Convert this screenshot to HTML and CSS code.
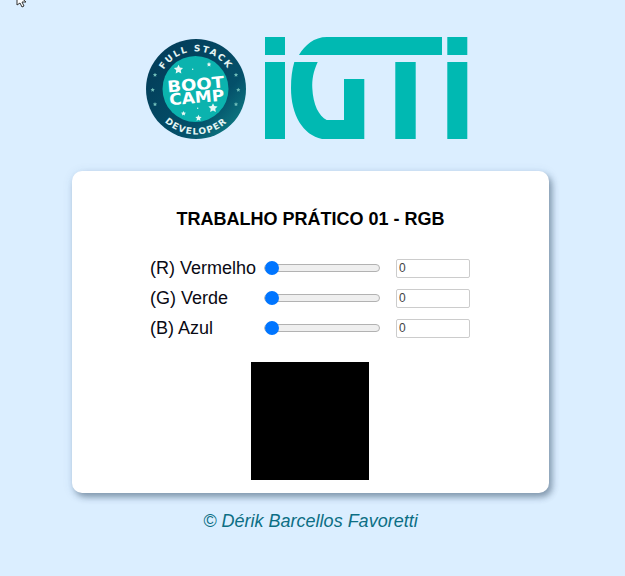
FILE: index.html
```html
<!DOCTYPE html>
<html lang="pt">
<head>
    <meta charset="UTF-8">
    <meta name="viewport" content="width=device-width, initial-scale=1.0">
    <title>Trabalho Prático 01 - RGB</title>
    <link rel="stylesheet" href="styles.css">
</head>
<body>

    <svg class="cursor" width="14" height="8" viewBox="0 0 14 8">
        <path d="M2 -6 L2 5 L5 3 L7 7 L9 6 L7 2 L11 2 Z" fill="#fff" stroke="#333" stroke-width="1"/>
    </svg>

    <div class="logos">
        <svg class="badge" width="100" height="100" viewBox="0 0 100 100">
            <defs>
                <linearGradient id="ring" x1="0.2" y1="0.2" x2="0.95" y2="0.9">
                    <stop offset="0" stop-color="#033f5b"/>
                    <stop offset="0.65" stop-color="#04506a"/>
                    <stop offset="1" stop-color="#0f7f85"/>
                </linearGradient>
                <path id="arc-top" d="M 12.5 50 A 37.5 37.5 0 0 1 87.5 50"/>
                <path id="arc-bottom" d="M 4.5 50 A 45.5 45.5 0 0 0 95.5 50"/>
                <path id="star" d="M0 -1L.29 -.4L.95 -.31L.47 .15L.59 .81L0 .5L-.59 .81L-.47 .15L-.95 -.31L-.29 -.4Z"/>
            </defs>
            <circle cx="50" cy="50" r="50" fill="url(#ring)"/>
            <circle cx="49.500" cy="50" r="33" fill="#0bb3ae"/>
            <text class="badge-ring" letter-spacing="1.7"><textPath href="#arc-top" startOffset="50%" text-anchor="middle">FULL STACK</textPath></text>
            <text class="badge-ring" letter-spacing="1.1"><textPath href="#arc-bottom" startOffset="50%" text-anchor="middle">DEVELOPER</textPath></text>
            <g transform="rotate(-5 50 50)">
                <text class="badge-big" x="50" y="51" text-anchor="middle" textLength="57" lengthAdjust="spacingAndGlyphs">BOOT</text>
                <text class="badge-big" x="50" y="64" text-anchor="middle" textLength="55" lengthAdjust="spacingAndGlyphs">CAMP</text>
            </g>
            <g fill="#e6f8f5">
                <use href="#star" transform="translate(32.500 30.500) scale(4.800)"/>
                <use href="#star" transform="translate(67 69) scale(4.800)"/>
                <use href="#star" transform="translate(52.500 79) scale(3.300)"/>
                <use href="#star" transform="translate(37.500 74.500) scale(2.600)"/>
                <use href="#star" transform="translate(63 25.500) scale(2.400)"/>
                <circle cx="46.700" cy="30.300" r="0.7"/>
                <circle cx="51.700" cy="69.300" r="0.7"/>
            </g>
            <g fill="#6fbdb8">
                <use href="#star" transform="translate(9 36) scale(2.200)"/>
                <use href="#star" transform="translate(6.700 51) scale(2.200)"/>
                <use href="#star" transform="translate(9 65.300) scale(2.200)"/>
                <use href="#star" transform="translate(90 36) scale(2.200)"/>
                <use href="#star" transform="translate(92.300 51) scale(2.200)"/>
                <use href="#star" transform="translate(90 65.300) scale(2.200)"/>
            </g>
        </svg>
        <svg class="igti" width="203" height="102" viewBox="265 37 203 102">
            <path fill="#00b9b2" d="M265 37h20v18h-20z M265 62h20v77h-20z M299 55C305 45 314 37 327 37H442V55Z M294.300 62H317.700C313 72 312 80 312.300 88C313 105 319 116 326.700 120H344V79H364.300V139H322C303 135 291 115 291 88C291 78 292 70 294.300 62Z M395.300 62h20.400v77h-20.400z M447.300 37h20v18h-20z M447.300 62h20v77h-20z"/>
        </svg>
    </div>

    <div class="container">
        <h1>TRABALHO PRÁTICO 01 - RGB</h1>

        <div class="controls">
            <div class="row">
                <label for="red">(R) Vermelho</label>
                <input class="slider" type="range" id="red" min="0" max="255" value="0">
                <input class="value" type="text" value="0" readonly>
            </div>
            <div class="row">
                <label for="green">(G) Verde</label>
                <input class="slider" type="range" id="green" min="0" max="255" value="0">
                <input class="value" type="text" value="0" readonly>
            </div>
            <div class="row">
                <label for="blue">(B) Azul</label>
                <input class="slider" type="range" id="blue" min="0" max="255" value="0">
                <input class="value" type="text" value="0" readonly>
            </div>
        </div>

        <div class="preview"></div>
    </div>

    <p class="footer">© Dérik Barcellos Favoretti</p>

</body>
</html>
```

FILE: styles.css
```css
body {
    font-family: 'Liberation Sans', Arial, sans-serif;
    background-color: #dbeeff;
    color: #000;
    margin: 0;
    padding: 0;
}
.cursor {
    position: absolute;
    top: 0;
    left: 15px;
}
.logos {
    display: flex;
    justify-content: center;
    align-items: flex-end;
    gap: 19px;
    padding-top: 37px;
    margin-left: -11px;
}
.badge-ring {
    font-family: 'DejaVu Sans', sans-serif;
    font-size: 9px;
    font-weight: bold;
    fill: #e4f5f3;
}
.badge-big {
    font-family: 'DejaVu Sans', sans-serif;
    font-size: 16px;
    font-weight: bold;
    fill: #fff;
}
.container {
    width: 477px;
    height: 322px;
    margin: 32px 0 0 72px;
    background-color: #fff;
    border-radius: 10px;
    box-shadow: 1px 2px 12px rgba(0, 70, 140, 0.12), 3px 4px 6px rgba(30, 50, 70, 0.42);
    overflow: hidden;
}
h1 {
    margin: 38px 0 0;
    text-align: center;
    font-size: 18px;
    line-height: 20px;
}
.controls {
    margin: 24px 0 0 78px;
}
.row {
    display: flex;
    align-items: center;
    height: 30px;
}
.row label {
    width: 114px;
    font-size: 18px;
    color: #0a0a14;
}
.slider {
    appearance: none;
    -webkit-appearance: none;
    width: 114px;
    height: 6px;
    margin: 0;
    background-color: #efefef;
    border: 1px solid #b2b2b2;
    border-radius: 4px;
}
.slider::-webkit-slider-thumb {
    -webkit-appearance: none;
    width: 14px;
    height: 14px;
    border-radius: 50%;
    background-color: #0075ff;
}
.value {
    box-sizing: border-box;
    width: 74px;
    height: 19px;
    margin-left: 16px;
    padding: 1px 2px;
    font-family: 'Liberation Sans', Arial, sans-serif;
    font-size: 12px;
    color: #444;
    border: 1px solid #ccc;
    border-radius: 2px;
}
.preview {
    width: 118px;
    height: 118px;
    margin: 19px 0 0 179px;
    background-color: #000;
}
.footer {
    margin: 18px 4px 0 0;
    text-align: center;
    font-size: 18px;
    font-style: italic;
    color: #0c6e84;
}
```
